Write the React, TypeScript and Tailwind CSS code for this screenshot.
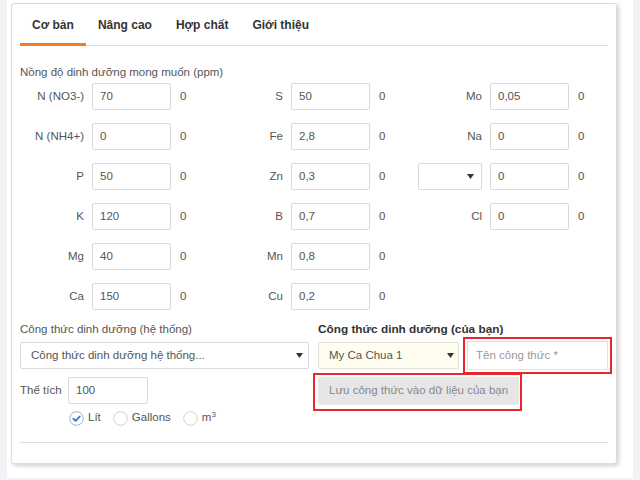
import type { ReactNode } from 'react'

const FONT = { fontFamily: '"Liberation Sans", Arial, sans-serif' }

type Cell = { label?: string; value: string; select?: boolean }

const rows: Cell[][] = [
    [{ label: 'N (NO3-)', value: '70' }, { label: 'S', value: '50' }, { label: 'Mo', value: '0,05' }],
    [{ label: 'N (NH4+)', value: '0' }, { label: 'Fe', value: '2,8' }, { label: 'Na', value: '0' }],
    [{ label: 'P', value: '50' }, { label: 'Zn', value: '0,3' }, { select: true, value: '0' }],
    [{ label: 'K', value: '120' }, { label: 'B', value: '0,7' }, { label: 'Cl', value: '0' }],
    [{ label: 'Mg', value: '40' }, { label: 'Mn', value: '0,8' }],
    [{ label: 'Ca', value: '150' }, { label: 'Cu', value: '0,2' }],
]

const tabs = ['Cơ bản', 'Nâng cao', 'Hợp chất', 'Giới thiệu']

function Arrow() {
    return (
        <svg width="7" height="5" viewBox="0 0 7 5" className="shrink-0">
            <path d="M0 0h7L3.5 5z" fill="#333" />
        </svg>
    )
}

function Field({ value, className = '' }: { value: string; className?: string }) {
    return (
        <div
            className={`flex h-[27px] items-center rounded-[2px] border border-[#dadada] bg-white pl-[7px] text-[11.5px] text-[#555] ${className}`}
        >
            {value}
        </div>
    )
}

function Radio({ checked, children }: { checked?: boolean; children: ReactNode }) {
    return (
        <div className="flex items-center">
            {checked ? (
                <svg width="15" height="15" viewBox="0 0 15 15">
                    <circle cx="7.5" cy="7.5" r="6.8" fill="#fff" stroke="#8fb3dc" strokeWidth="1" />
                    <path d="M4.3 7.6l2.3 2.3 4.2-4.4" fill="none" stroke="#2f74c8" strokeWidth="1.8" strokeLinecap="round" strokeLinejoin="round" />
                </svg>
            ) : (
                <svg width="15" height="15" viewBox="0 0 15 15">
                    <circle cx="7.5" cy="7.5" r="6.8" fill="#fff" stroke="#d0d0d0" strokeWidth="1" />
                </svg>
            )}
            <span className="ml-[4px] text-[11.5px] text-[#555]">{children}</span>
        </div>
    )
}

export default function App() {
    return (
        <div className="h-[480px] w-[640px] bg-[#f2f3f6] pl-[7px]" style={FONT}>
            <div className="h-[478px] w-[626px] bg-white pl-[4px] pt-[3px]">
                <div className="h-[461px] w-[606px] rounded-[3px] border border-[#dcdcdc] bg-white px-[8px] shadow-[2px_2px_4px_rgba(0,0,0,0.18)]">
                    <div className="flex h-[42px] border-b border-[#dedede]">
                        {tabs.map((t, i) => (
                            <div
                                key={t}
                                className={[
                                    'flex h-[42px] items-center px-[12px] text-[12px] font-bold text-[#333]',
                                    i === 0 ? 'border-b-[3px] border-[#f47c22] pt-[3px]' : '',
                                ].join(' ')}
                            >
                                {t}
                            </div>
                        ))}
                    </div>

                    <div className="mt-[18px] text-[11.5px] leading-[16px] text-[#555]">
                        Nồng độ dinh dưỡng mong muốn (ppm)
                    </div>

                    <div className="mt-[3px] grid grid-cols-[199px_199px_1fr] gap-y-[13px]">
                        {rows.map((row, r) =>
                            [0, 1, 2].map((c) => {
                                const cell = row[c]
                                if (!cell) return <div key={`${r}-${c}`} className="h-[27px]" />
                                return (
                                    <div key={`${r}-${c}`} className="flex h-[27px] items-center">
                                        {cell.select ? (
                                            <div className="flex h-[27px] w-[64px] items-center justify-end rounded-[2px] border border-[#dadada] pr-[7px]">
                                                <Arrow />
                                            </div>
                                        ) : (
                                            <div className="w-[64px] text-right text-[11.5px] text-[#555]">{cell.label}</div>
                                        )}
                                        <Field value={cell.value} className="ml-[8px] w-[79px]" />
                                        <span className="ml-[9px] text-[11.5px] text-[#555]">0</span>
                                    </div>
                                )
                            }),
                        )}
                    </div>

                    <div className="mt-[11px] flex">
                        <div className="w-[289px] shrink-0">
                            <div className="text-[11.5px] leading-[16px] text-[#555]">Công thức dinh dưỡng (hệ thống)</div>
                            <div className="mt-[5px] flex h-[27px] items-center justify-between rounded-[2px] border border-[#dadada] pl-[10px] pr-[5px] text-[11.5px] text-[#555]">
                                <span>Công thức dinh dưỡng hệ thống...</span>
                                <Arrow />
                            </div>
                            <div className="mt-[8px] flex items-center">
                                <span className="w-[48px] text-[11.5px] text-[#555]">Thể tích</span>
                                <Field value="100" className="w-[80px]" />
                            </div>
                            <div className="ml-[49px] mt-[6px] flex h-[16px] items-center gap-[12px]">
                                <Radio checked>Lít</Radio>
                                <Radio>Gallons</Radio>
                                <Radio>
                                    m<sup className="text-[8px]">3</sup>
                                </Radio>
                            </div>
                        </div>

                        <div className="ml-[9px] shrink-0">
                            <div className="text-[11.8px] font-bold leading-[16px] text-[#333]">Công thức dinh dưỡng (của bạn)</div>
                            <div className="flex h-[37px] items-center">
                                <div className="flex h-[27px] w-[141px] items-center justify-between rounded-[2px] border border-[#e4e2d4] bg-[#fffdf0] pl-[10px] pr-[4px] text-[11.5px] text-[#555]">
                                    <span>My Ca Chua 1</span>
                                    <Arrow />
                                </div>
                                <div className="ml-[4px] h-[37px] w-[149px] border-2 border-[#e8262c] p-[2px]">
                                    <div className="flex h-full items-center border border-[#e2e2e2] pl-[8px] text-[11.5px] text-[#999]">
                                        Tên công thức *
                                    </div>
                                </div>
                            </div>
                            <div className="-ml-[5px] -mt-[1px] h-[38px] w-[209px] border-2 border-[#e8262c] pl-[3px] pt-[2px]">
                                <div className="flex h-[28px] w-[201px] items-center rounded-[2px] bg-[#e6e6e6] pl-[11px] text-[11.5px] text-[#888]">
                                    Lưu công thức vào dữ liệu của bạn
                                </div>
                            </div>
                        </div>
                    </div>

                    <div className="mt-[16px] border-t border-[#dedede]" />
                </div>
            </div>
        </div>
    )
}
